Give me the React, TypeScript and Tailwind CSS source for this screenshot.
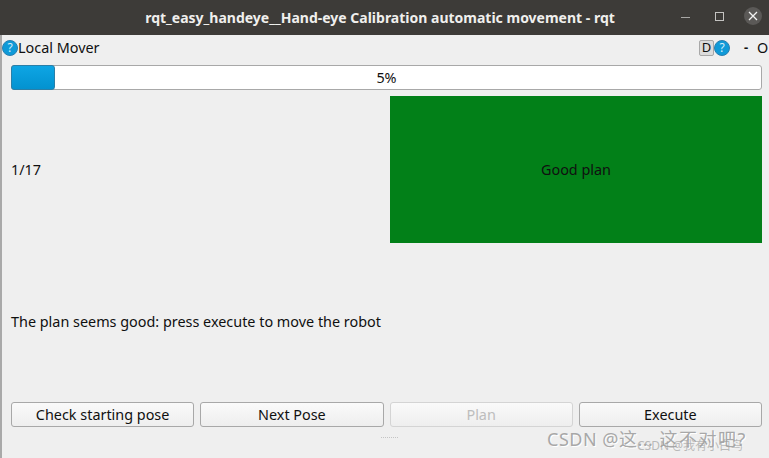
import React from "react";

function Help({ className = "" }: { className?: string }) {
  return (
    <div
      className={`flex h-[16px] w-[16px] shrink-0 items-center justify-center rounded-full border border-[#2a7fb0] bg-[#0f9ad8] text-[12px] leading-none text-[#d8eefa] ${className}`}
    >
      ?
    </div>
  );
}

function Btn({ label, disabled = false }: { label: string; disabled?: boolean }) {
  return (
    <div
      className={`flex h-[25px] flex-1 items-center justify-center rounded-[3px] border bg-gradient-to-b from-[#fafafa] to-[#eeeeee] ${
        disabled ? "border-[#d4d4d4] text-[#bdbdbd]" : "border-[#a8a8a8] text-[#101010]"
      }`}
    >
      {label}
    </div>
  );
}

export default function App() {
  return (
    <div
      className="relative flex h-[458px] w-[769px] flex-col overflow-hidden bg-[#efefef] text-[14.4px] text-[#101010]"
      style={{ fontFamily: '"Noto Sans", "Noto Sans CJK SC", sans-serif' }}
    >
      {/* barra de titulo */}
      <div className="relative flex h-[35px] shrink-0 items-center justify-center bg-[#3d3b38] pr-[9px] text-[14px] font-bold text-[#f0efed]">
        rqt_easy_handeye__Hand-eye Calibration automatic movement - rqt
        <div className="absolute left-[681px] top-[17px] h-px w-[9px] bg-[#a8a7a5]" />
        <div className="absolute left-[715px] top-[12px] h-[9px] w-[9px] border border-[#c4c3c1]" />
        <div className="absolute left-[744px] top-[7px] flex h-[18px] w-[18px] items-center justify-center rounded-full bg-[#5b5957]">
          <svg width="10" height="10" viewBox="0 0 10 10">
            <path d="M1 1 L9 9 M9 1 L1 9" stroke="#f2f2f2" strokeWidth="1.3" />
          </svg>
        </div>
      </div>

      <div className="flex flex-1 flex-col border-l-2 border-[#a9a9a9] pr-[7px]">
        {/* cabecera del dock */}
        <div className="flex h-[26px] items-center">
          <Help />
          <span>Local Mover</span>
          <div className="-mr-[7px] ml-auto flex items-center">
            <div className="flex h-[16px] w-[15px] items-center justify-center rounded-[2px] border border-[#a8a8a8] bg-[#dcdcdc] text-[13px]">
              D
            </div>
            <Help />
            <span className="ml-[14px] w-[5px] text-[13px] font-bold leading-none">-</span>
            <span className="ml-[8px] w-[12px]">O</span>
          </div>
        </div>

        <div className="mt-[4px] flex flex-1 flex-col pl-[9px]">
          {/* barra de progreso */}
          <div className="relative flex h-[25px] items-center justify-center rounded-[3px] border border-[#a8a8a8] bg-white">
            <div className="absolute bottom-[-1px] left-[-1px] top-[-1px] w-[44px] rounded-[3px] border border-[#2a7fa8] bg-gradient-to-b from-[#0ea5e4] to-[#0392d0]" />
            <span className="relative">5%</span>
          </div>

          <div className="mt-[6px] flex h-[147px]">
            <div className="flex flex-1 items-center">1/17</div>
            <div className="flex w-[372px] items-center justify-center bg-[#028018]">Good plan</div>
          </div>

          <div className="flex flex-1 items-center pb-[1px]">The plan seems good: press execute to move the robot</div>

          <div className="flex gap-[6px]">
            <Btn label="Check starting pose" />
            <Btn label="Next Pose" />
            <Btn label="Plan" disabled />
            <Btn label="Execute" />
          </div>

          <div className="flex h-[31px] justify-center pt-[10px]">
            <div className="ml-[5px] h-px w-[17px] border-t border-dotted border-[#c4c4c4]" />
          </div>
        </div>
      </div>

      {/* marca de agua */}
      <div className="absolute left-[547px] top-[426px] text-[18px] tracking-[0.5px] text-[#a8a8a8] [text-shadow:1px_1px_0_#ffffff]">
        CSDN @这...<span className="ml-[6px] tracking-[1.5px]">这不对吧?</span>
      </div>
      <div className="absolute left-[637px] top-[437px] text-[12px] text-[#a0a0a0]/70">
        CSDN @我有小白鸟
      </div>
    </div>
  );
}
